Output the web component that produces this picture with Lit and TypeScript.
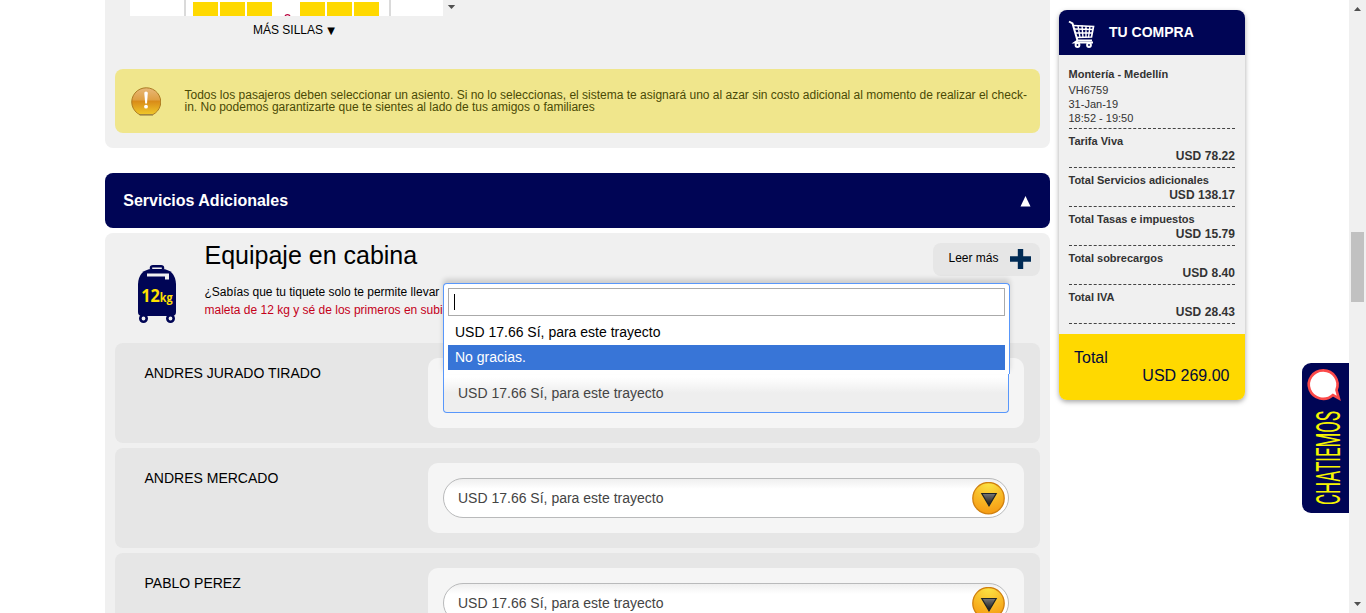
import { LitElement, html, css } from "lit";
import { customElement, property } from "lit/decorators.js";

@customElement("seat-map")
class SeatMap extends LitElement {
  static styles = css`
    :host { display: flex; height: 16px; width: 330px; overflow: hidden; }
    .plane { width: 313px; height: 16px; background: #fff; display: grid; grid-template-columns: 54px 2px 7px 80px 27px 80px 9px 2px 52px; }
    .wall { background: #dadada; }
    .seats { display: flex; gap: 2px; padding-top: 2px; }
    .seat { width: 25px; height: 14px; background: #ffd900; }
    .aisle { width: 27px; height: 16px; display: block; }
    .bar { width: 17px; height: 16px; display: block; }
  `;
  render() {
    const seats = html`<div class="seats">${[1, 2, 3].map(() => html`<div class="seat"></div>`)}</div>`;
    return html`
      <div class="plane">
        <span></span><span class="wall"></span><span></span>
        ${seats}
        <svg class="aisle" viewBox="0 0 27 16"><path d="M12 16.400Q12.500 14.600 14.500 14.600T17 16.400" fill="none" stroke="#b8003c" stroke-width="1.300"/></svg>
        ${seats}
        <span></span><span class="wall"></span><span></span>
      </div>
      <svg class="bar" viewBox="0 0 17 16"><path d="M4.800 5H12.200L8.500 9Z" fill="#505050"/></svg>`;
  }
}

@customElement("service-select")
class ServiceSelect extends LitElement {
  @property({ type: Boolean }) open = false;
  @property() value = "";
  static styles = css`
    :host { display: block; position: relative; box-sizing: border-box; width: 596px; height: 70px; padding: 15px; border-radius: 10px; background: #f5f5f5; }
    .field { box-sizing: border-box; width: 566px; height: 40px; padding: 0 3px 0 14px; border: 1px solid #b9babb; border-radius: 20px; display: flex; justify-content: space-between; align-items: center; background: linear-gradient(#efefef 0, #fff 10px); color: #444; font-size: 14px; line-height: 38px; }
    .field.open { border: 1px solid #5897fb; border-top-color: transparent; border-radius: 0 0 4px 4px; background: linear-gradient(#fff 8%, #eee 50%); background-clip: padding-box; }
    .arrow { width: 33px; height: 33px; display: block; }
    .drop { box-sizing: border-box; position: absolute; z-index: 3; left: 15px; top: -75px; width: 567px; height: 91px; background: #fff; border: 1px solid #5897fb; border-bottom: 0; border-radius: 4px 4px 0 0; padding: 4px; box-shadow: 0 -4px 5px rgba(0, 0, 0, 0.15); font-size: 14px; color: #000; }
    .search { box-sizing: border-box; height: 28px; border: 1px solid #aaa; background: #fff; padding: 5px; margin-bottom: 4px; }
    .caret { width: 1px; height: 16px; background: #000; }
    .option { height: 25px; line-height: 24px; padding-left: 7px; }
    .option.active { background: #3875d7; color: #fff; }
  `;
  render() {
    if (this.open) {
      return html`
        <div class="field open">${this.value}</div>
        <div class="drop">
          <div class="search"><div class="caret"></div></div>
          <div class="option">USD 17.66 Sí, para este trayecto</div>
          <div class="option active">No gracias.</div>
        </div>`;
    }
    return html`
      <div class="field">
        <span>${this.value}</span>
        <svg class="arrow" viewBox="0 0 33 33">
          <defs>
            <radialGradient id="g" cx=".5" cy="0" r="1"><stop offset="0" stop-color="#fbe544"/><stop offset=".65" stop-color="#f8b322"/><stop offset="1" stop-color="#f59a12"/></radialGradient>
            <linearGradient id="t" x2="0" y2="1"><stop offset="0" stop-color="#777"/><stop offset="1" stop-color="#111"/></linearGradient>
          </defs>
          <circle cx="16.500" cy="16.200" r="15.700" fill="url(#g)" stroke="#d0800f" stroke-width="1.300"/>
          <path d="M9.800 11.500H24.200L17 23.800Z" fill="url(#t)" stroke="#1d2428" stroke-width="1.200"/>
        </svg>
      </div>`;
  }
}

@customElement("purchase-summary")
class PurchaseSummary extends LitElement {
  static styles = css`
    :host { display: block; width: 186px; height: 390px; border-radius: 8px; overflow: hidden; background: #f0f0f0; box-shadow: 0 2px 5px rgba(0, 0, 0, 0.35); color: #333; }
    .head { height: 45px; background: #000555; color: #fff; display: flex; align-items: center; gap: 13px; padding-left: 9px; font-weight: bold; font-size: 14px; }
    .head span { padding-bottom: 1px; }
    .cart { width: 28px; height: 28px; display: block; margin-top: 3px; }
    .body { height: 279px; padding: 11px 10px 0 9.500px; box-sizing: border-box; font-size: 11px; }
    .flight { border-bottom: 1px dashed #444; height: 62px; line-height: 14px; }
    .route { font-weight: bold; line-height: 16px; margin-bottom: 1px; }
    .row { height: 33px; border-bottom: 1px dashed #444; font-weight: bold; padding-top: 5px; }
    .label { line-height: 14px; margin-bottom: 1px; }
    .amount { font-size: 12px; line-height: 15px; text-align: right; letter-spacing: 0.05px; }
    .total { height: 66px; background: #ffd900; color: #000a3c; font-size: 16px; line-height: 18px; padding: 15px 15.500px 0 15px; box-sizing: border-box; }
    .sum { text-align: right; }
  `;
  rows = [
    ["Tarifa Viva", "USD 78.22"],
    ["Total Servicios adicionales", "USD 138.17"],
    ["Total Tasas e impuestos", "USD 15.79"],
    ["Total sobrecargos", "USD 8.40"],
    ["Total IVA", "USD 28.43"],
  ];
  render() {
    return html`
      <div class="head">
        <svg class="cart" viewBox="0 0 28 28" fill="none" stroke="#fff">
          <path d="M1 1.500L4.500 3.500L9.500 20.500H24" stroke-width="2"/>
          <path d="M5 5.500L25.500 6.500L23.500 17L8.500 17.500" stroke-width="1.700"/>
          <path d="M6 9L25 9.500M7 13H24M10 5.500L12 17.500M14 5.500L15 17.500M18 6V17.500M22 6L20.500 17.500" stroke-width="1.400"/>
          <path d="M9.500 20.500L6.500 22.500H25" stroke-width="1.800"/>
          <circle cx="9.500" cy="25" r="1.900" stroke-width="2"/><circle cx="21" cy="25" r="1.900" stroke-width="2"/>
        </svg>
        <span>TU COMPRA</span>
      </div>
      <div class="body">
        <div class="flight">
          <div class="route">Montería - Medellín</div>
          <div>VH6759</div><div>31-Jan-19</div><div>18:52 - 19:50</div>
        </div>
        ${this.rows.map(([l, a]) => html`<div class="row"><div class="label">${l}</div><div class="amount">${a}</div></div>`)}
      </div>
      <div class="total"><div>Total</div><div class="sum">USD 269.00</div></div>`;
  }
}

@customElement("app-root")
class AppRoot extends LitElement {
  static styles = css`
    :host { display: flex; position: relative; width: 1366px; height: 613px; overflow: hidden; background: #fff; font-family: "Liberation Sans", Arial, sans-serif; color: #000; }
    .page { flex: 1; display: flex; gap: 9px; padding-left: 105px; }
    .main { width: 945px; }
    .side { padding-top: 10px; }
    .seatpanel { box-sizing: border-box; height: 148px; background: #f0f0f0; border-radius: 0 0 8px 8px; padding: 0 10px; }
    seat-map { margin-left: 15px; }
    .more { width: 358px; text-align: center; font-size: 12px; line-height: 14px; padding-top: 7px; height: 46px; }
    .more i { font: normal 10px/14px "DejaVu Sans", sans-serif; margin-left: 1px; }
    .alert { box-sizing: border-box; height: 64px; border-radius: 8px; background: #f0e68c; display: flex; align-items: center; color: #4a4a05; font-size: 12px; line-height: 12px; }
    .warn { width: 30px; height: 30px; margin: 0 24px 0 15.500px; display: block; flex: none; }
    .heading { margin-top: 25px; height: 55px; box-sizing: border-box; border-radius: 8px; background: #000555; color: #fff; display: flex; justify-content: space-between; align-items: center; padding: 0 19px 0 18.300px; font-weight: bold; font-size: 16px; }
    .up { width: 11px; height: 11px; margin-top: 2px; }
    .services { margin-top: 5px; background: #f0f0f0; border-radius: 8px; padding: 0 10px; height: 390px; }
    .intro { height: 110px; display: flex; }
    .bag { width: 42px; height: 60px; margin: 31px 0 0 21px; flex: none; display: block; }
    .copy { margin-left: 26.500px; flex: 1; padding-top: 7px; font-size: 12px; line-height: 18px; white-space: nowrap; width: 0; }
    h2 { margin: 0 0 12px; font-weight: normal; font-size: 25px; line-height: 31px; }
    .promo { color: #c4001a; }
    .read { margin-top: 10px; height: 33px; width: 107px; box-sizing: border-box; border-radius: 8px; background: #e6e6e6; display: flex; justify-content: space-between; align-items: center; padding: 0 9px 0 15.500px; font-size: 12px; }
    .read span { padding-bottom: 3px; }
    .plus { width: 21px; height: 20px; display: block; margin-bottom: 2px; }
    .passenger { box-sizing: border-box; height: 100px; margin-bottom: 5px; border-radius: 8px; background: #e6e6e6; padding: 15px 16px 0 29.500px; display: flex; justify-content: space-between; }
    .name { font-size: 14px; line-height: 30px; }
    .scroll { width: 17px; background: #f0f0f0; position: relative; display: flex; flex-direction: column; align-items: center; justify-content: space-between; }
    .scroll svg { width: 17px; height: 17px; display: block; }
    .thumb { position: absolute; left: 2px; top: 232px; width: 13px; height: 70px; background: #c1c1c1; }
    .chat { position: absolute; left: 1302px; top: 363px; width: 47px; height: 150px; background: #000555; border-radius: 9px 0 0 9px; }
    .weight { font-family: "Open Sans", sans-serif; font-weight: 700; font-size: 18px; fill: #ffe000; }
    .unit { font-size: 12px; }
    .chatlabel { font-family: Roboto, sans-serif; font-weight: 400; font-size: 33px; fill: #f7f500; }
  `;
  passengers = ["ANDRES JURADO TIRADO", "ANDRES MERCADO", "PABLO PEREZ"];
  render() {
    return html`
      <div class="page">
        <div class="main">
          <div class="seatpanel">
            <seat-map></seat-map>
            <div class="more">MÁS SILLAS <i>▼</i></div>
            <div class="alert">
              <svg class="warn" viewBox="0 0 30 30">
                <defs><linearGradient id="w" x2="0" y2="1"><stop offset="0" stop-color="#e8b878"/><stop offset=".44" stop-color="#dfa043"/><stop offset=".5" stop-color="#d98b18"/><stop offset="1" stop-color="#f0c92a"/></linearGradient></defs>
                <path d="M9 28.800A14.500 14.200 0 1 1 21.500 28.800Z" fill="url(#w)" stroke="#ad7b23"/>
                <path d="M8.500 28.900H22" stroke="#8d7d50"/>
                <path d="M13.300 7Q13.200 5.500 15 5.500T16.800 7L16 17.500H14.200Z" fill="#fff"/><circle cx="15" cy="20.700" r="1.900" fill="#fff"/>
              </svg>
              <div>Todos los pasajeros deben seleccionar un asiento. Si no lo seleccionas, el sistema te asignará uno al azar sin costo adicional al momento de realizar el check-<br>in. No podemos garantizarte que te sientes al lado de tus amigos o familiares</div>
            </div>
          </div>
          <div class="heading"><span>Servicios Adicionales</span><svg class="up" viewBox="0 0 11 11"><path d="M.5 10.500L5.500 0L10.500 10.500Z" fill="#fff"/></svg></div>
          <div class="services">
            <div class="intro">
              <svg class="bag" viewBox="0 0 42 60">
                <path d="M15 5.500V3.500Q15 2.200 17 2.200H25Q27 2.200 27 3.500V5.500" fill="none" stroke="#000555" stroke-width="2.400"/>
                <path d="M2 20Q3 5.500 16 5H26Q39 5.500 40 20V48Q40 52 36 52H6Q2 52 2 48Z" fill="#000555"/>
                <path d="M11 9.500H33V15.500H29V12.500H11Z" fill="#f0f0f0"/>
                <circle cx="7.500" cy="54.500" r="3.200" fill="#f0f0f0" stroke="#000555" stroke-width="2.600"/><circle cx="34.500" cy="54.500" r="3.200" fill="#f0f0f0" stroke="#000555" stroke-width="2.600"/>
                <text class="weight" x="5.200" y="37.500" textLength="31.500" lengthAdjust="spacingAndGlyphs">12<tspan class="unit">kg</tspan></text>
              </svg>
              <div class="copy">
                <h2>Equipaje en cabina</h2>
                <div>¿Sabías que tu tiquete solo te permite llevar</div>
                <div class="promo">maleta de 12 kg y sé de los primeros en subir</div>
              </div>
              <div class="read"><span>Leer más</span><svg class="plus" viewBox="0 0 21 20"><path d="M0 10H21M10.500 0V20" stroke="#002b55" stroke-width="5.400"/></svg></div>
            </div>
            ${this.passengers.map((p, i) => html`
              <div class="passenger">
                <div class="name">${p}</div>
                <service-select .open=${i === 0} value="USD 17.66 Sí, para este trayecto"></service-select>
              </div>`)}
          </div>
        </div>
        <div class="side"><purchase-summary></purchase-summary></div>
      </div>
      <div class="scroll">
        <svg viewBox="0 0 17 17"><path d="M5 11L8.500 7L12 11Z" fill="#505050"/></svg>
        <svg viewBox="0 0 17 17"><path d="M5 6L8.500 10L12 6Z" fill="#505050"/></svg>
        <div class="thumb"></div>
      </div>
      <svg class="chat" viewBox="0 0 47 150">
        <path d="M31 32A14.400 14.200 0 1 1 34.500 27L36.800 35.300Z" fill="#fff" stroke="#fb4a4a" stroke-width="2.600"/>
        <text class="chatlabel" transform="translate(38.300 142) rotate(-90) scale(.55 1)" textLength="171" lengthAdjust="spacingAndGlyphs">CHATIEMOS</text>
      </svg>`;
  }
}
